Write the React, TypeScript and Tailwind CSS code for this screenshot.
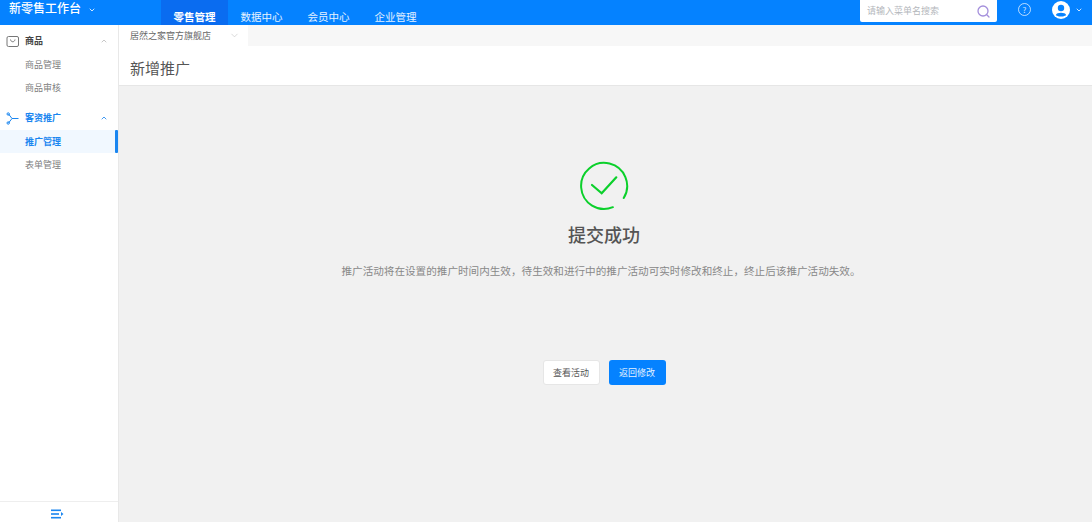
import { ChevronDown, ChevronUp } from "lucide-react";

const cjk = "font-['Noto_Sans_CJK_SC','Liberation_Sans',sans-serif]";

const topNav = [
  { label: "零售管理", active: true },
  { label: "数据中心" },
  { label: "会员中心" },
  { label: "企业管理" },
];

const Header = () => (
  <header className="flex h-[25px] shrink-0 items-stretch bg-[#0582ff] text-white">
    <div className="flex w-[161px] items-start pl-[9px]">
      <span className="text-[12px] leading-[16px] font-medium">新零售工作台</span>
      <ChevronDown className="ml-[7px] mt-[6px] text-white/80" size={8} strokeWidth={3} />
    </div>
    <nav className="flex">
      {topNav.map((n) => (
        <div
          key={n.label}
          className={
            n.active
              ? "flex w-[67px] items-end justify-center bg-[#0a6cf0] pb-[1px] text-[10.5px] leading-[14px] font-bold"
              : "flex w-[67px] items-end justify-center pb-[1px] text-[10.5px] leading-[14px] text-white/90"
          }
        >
          {n.label}
        </div>
      ))}
    </nav>
    <div className="ml-auto flex items-start">
      <div className="flex h-[22px] w-[137px] items-center justify-between rounded-b-[2px] bg-white pl-[7px] pr-[6px]">
        <span className="text-[9px] text-[#b4b7bc]">请输入菜单名搜索</span>
        <svg width="15" height="15" viewBox="0 0 15 15" fill="none" stroke="#a48fdc" strokeWidth="1.3">
          <circle cx="7" cy="7" r="5" />
          <path d="M10.8 10.8 L13 13" strokeLinecap="round" />
        </svg>
      </div>
      <div className="ml-[21px] mt-[3px] flex h-[13px] w-[13px] items-center justify-center rounded-full border border-white/70 text-[8px] leading-none text-white/80">
        ?
      </div>
      <svg className="ml-[21px] mt-[1px]" width="18" height="18" viewBox="0 0 18 18">
        <circle cx="9" cy="9" r="9" fill="#fff" />
        <circle cx="9" cy="7" r="3.2" fill="#0582ff" />
        <path d="M3.8 14.2 C4.6 11 13.4 11 14.2 14.2 L11 15.5 L7 15.5 Z" fill="#0582ff" />
      </svg>
      <ChevronDown className="ml-[5px] mr-[9px] mt-[6px] text-white/80" size={8} strokeWidth={3} />
    </div>
  </header>
);

const SubItem = ({ label, active }: { label: string; active?: boolean }) => (
  <div
    className={
      active
        ? "flex h-[23px] items-center justify-between bg-[#f1f8ff] pl-[25px] text-[9px] font-bold text-[#1a86f0]"
        : "flex h-[23px] items-center pl-[25px] text-[9px] text-[#808080]"
    }
  >
    <span>{label}</span>
    {active && <span className="h-full w-[3px] rounded-[1px] bg-[#1a86f0]" />}
  </div>
);

const Sidebar = () => (
  <aside className="flex w-[119px] shrink-0 flex-col border-r border-[#e8e8e8] bg-white">
    <div className="flex h-[28px] items-center pl-[6px] pr-[10px] pt-[4px]">
      <svg width="14" height="13" viewBox="0 0 14 13" fill="none" stroke="#777" strokeWidth="1">
        <rect x="1" y="1.5" width="11.5" height="10" rx="1.5" />
        <path d="M4.5 4.5 C5 7.5 8.5 7.5 9 4.5" />
      </svg>
      <span className="ml-[5px] text-[9px] font-bold text-[#444]">商品</span>
      <ChevronUp className="ml-auto text-[#aaa]" size={8} strokeWidth={2} />
    </div>
    <SubItem label="商品管理" />
    <SubItem label="商品审核" />
    <div className="mt-[7px] flex h-[24px] items-center pl-[6px] pr-[10px]">
      <svg width="14" height="13" viewBox="0 0 14 13" fill="none" stroke="#1a86f0" strokeWidth="1">
        <path d="M2.5 2 L6 6.5 L2.5 11 M6 6.5 L12.5 6.5" />
        <circle cx="2.2" cy="2" r="1.2" />
        <circle cx="2.2" cy="11" r="1.2" />
      </svg>
      <span className="ml-[5px] text-[9px] font-bold text-[#1a86f0]">客资推广</span>
      <ChevronUp className="ml-auto text-[#1a86f0]" size={8} strokeWidth={2.5} />
    </div>
    <SubItem label="推广管理" active />
    <SubItem label="表单管理" />
    <div className="mt-auto flex h-[21px] items-center justify-center border-t border-[#eeeeee] pr-[3px] pt-[4px]">
      <svg width="13" height="10" viewBox="0 0 13 10" fill="#1a86f0">
        <rect x="0" y="0.5" width="10" height="1.6" />
        <rect x="0" y="4.2" width="8" height="1.6" />
        <rect x="0" y="7.9" width="10" height="1.6" />
        <path d="M10 3 L12.5 5 L10 7 Z" />
      </svg>
    </div>
  </aside>
);

export default function App() {
  return (
    <div className={`flex h-[522px] w-[1092px] flex-col overflow-hidden bg-[#f1f1f1] ${cjk}`}>
      <Header />
      <div className="flex min-h-0 flex-1">
        <Sidebar />
        <main className="flex min-w-0 flex-1 flex-col">
          <div className="flex h-[21px] shrink-0 bg-[#f7f7f7]">
            <div className="flex w-[129px] items-center bg-white pl-[11px] text-[9px] text-[#666]">
              居然之家官方旗舰店
              <ChevronDown className="ml-[18px] text-[#bbb]" size={11} strokeWidth={1.2} />
            </div>
          </div>
          <div className="flex h-[40px] shrink-0 items-center border-b border-[#e6e6e6] bg-white pl-[11px] pt-[5px] text-[15px] text-[#555]">
            新增推广
          </div>
          <div className="flex flex-1 flex-col items-center pr-[3px] pt-[75px]">
            <svg width="50" height="50" viewBox="0 0 50 50" fill="none" stroke="#0bd02b" strokeWidth="2" strokeLinecap="round">
              <path d="M44.7 37 A23 23 0 1 0 33.9 46.2" />
              <path d="M13 24 L22.7 32.3 L37.3 16.3" strokeWidth="2.2" />
            </svg>
            <div className="mt-[11px] text-[18px] leading-[24px] font-medium text-[#555]">提交成功</div>
            <p className="mr-[6px] mt-[18px] text-[10.6px] leading-[14px] text-[#888]">
              推广活动将在设置的推广时间内生效，待生效和进行中的推广活动可实时修改和终止，终止后该推广活动失效。
            </p>
            <div className="mt-[82px] flex gap-[9px]">
              <button className="h-[25px] w-[57px] rounded-[3px] border border-[#e6e6e6] bg-white text-[9px] text-[#555]">
                查看活动
              </button>
              <button className="h-[25px] w-[57px] rounded-[3px] bg-[#0582ff] text-[9px] text-white/90">
                返回修改
              </button>
            </div>
          </div>
        </main>
      </div>
    </div>
  );
}
